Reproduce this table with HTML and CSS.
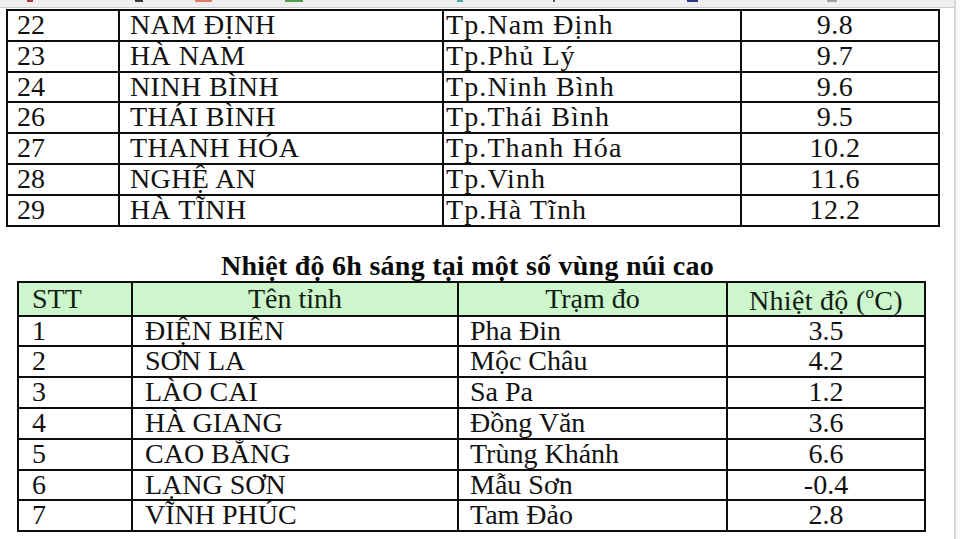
FILE: index.html
```html
<!DOCTYPE html>
<html lang="vi">
<head>
<meta charset="utf-8">
<title>Nhiệt độ</title>
<link rel="stylesheet" href="styles.css">
</head>
<body>
<div class="screen">
  <main class="doc">
    <div class="toolbar">
      <span class="mark m1"></span><span class="mark m2"></span><span class="mark m3"></span><span class="mark m4"></span><span class="mark m5"></span><span class="mark m6"></span><span class="mark m7"></span><span class="mark m8"></span>
    </div>
    <table class="t1">
      <colgroup><col class="c1"><col class="c2"><col class="c3"><col></colgroup>
      <tbody>
        <tr><td class="n">22</td><td class="p">NAM ĐỊNH</td><td class="s">Tp.Nam Định</td><td class="v">9.8</td></tr>
        <tr><td class="n">23</td><td class="p">HÀ NAM</td><td class="s">Tp.Phủ Lý</td><td class="v">9.7</td></tr>
        <tr><td class="n">24</td><td class="p">NINH BÌNH</td><td class="s">Tp.Ninh Bình</td><td class="v">9.6</td></tr>
        <tr><td class="n">26</td><td class="p">THÁI BÌNH</td><td class="s">Tp.Thái Bình</td><td class="v">9.5</td></tr>
        <tr><td class="n">27</td><td class="p">THANH HÓA</td><td class="s">Tp.Thanh Hóa</td><td class="v">10.2</td></tr>
        <tr><td class="n">28</td><td class="p">NGHỆ AN</td><td class="s">Tp.Vinh</td><td class="v">11.6</td></tr>
        <tr><td class="n">29</td><td class="p">HÀ TĨNH</td><td class="s">Tp.Hà Tĩnh</td><td class="v">12.2</td></tr>
      </tbody>
    </table>
    <section class="sec2">
      <h2 class="title">Nhiệt độ 6h sáng tại một số vùng núi cao</h2>
      <table class="t2">
        <colgroup><col class="d1"><col class="d2"><col class="d3"><col></colgroup>
        <thead>
          <tr class="head"><th class="n">STT</th><th class="mid">Tên tỉnh</th><th class="mid">Trạm đo</th><th class="mid temp">Nhiệt độ (<sup>o</sup>C)</th></tr>
        </thead>
        <tbody>
          <tr><td class="n">1</td><td class="p">ĐIỆN BIÊN</td><td class="s">Pha Đin</td><td class="v">3.5</td></tr>
          <tr><td class="n">2</td><td class="p">SƠN LA</td><td class="s">Mộc Châu</td><td class="v">4.2</td></tr>
          <tr><td class="n">3</td><td class="p">LÀO CAI</td><td class="s">Sa Pa</td><td class="v">1.2</td></tr>
          <tr><td class="n">4</td><td class="p">HÀ GIANG</td><td class="s">Đồng Văn</td><td class="v">3.6</td></tr>
          <tr><td class="n">5</td><td class="p">CAO BẰNG</td><td class="s">Trùng Khánh</td><td class="v">6.6</td></tr>
          <tr><td class="n">6</td><td class="p">LẠNG SƠN</td><td class="s">Mẫu Sơn</td><td class="v">-0.4</td></tr>
          <tr><td class="n">7</td><td class="p">VĨNH PHÚC</td><td class="s">Tam Đảo</td><td class="v">2.8</td></tr>
        </tbody>
      </table>
    </section>
  </main>
  <div class="edge"></div>
  <div class="rest"></div>
</div>
</body>
</html>
```
FILE: styles.css
```css
html, body {
  margin: 0;
  padding: 0;
  background: #fff;
}
body {
  font-family: "Liberation Serif", "Times New Roman", serif;
  color: #111;
}
.screen {
  display: flex;
  height: 539px;
  overflow: hidden;
}
.doc {
  width: 954px;
  flex: none;
}
.edge {
  width: 2px;
  flex: none;
  background: #d6d6d6;
}
.rest {
  flex: 1;
  background: #fafafa;
}

/* top strip */
.toolbar {
  height: 7px;
  background: #efefef;
  border-bottom: 1px solid #cbcbcb;
  display: flex;
  align-items: flex-start;
}
.mark { height: 2px; display: block; }
.m1 { margin-left: 27px; width: 6px; background: #b03a3a; }
.m2 { margin-left: 102px; width: 8px; background: #3a3a3a; }
.m3 { margin-left: 52px; width: 17px; background: #e07a66; }
.m4 { margin-left: 73px; width: 18px; background: #4f9f4f; }
.m5 { margin-left: 154px; width: 6px; background: #4aa8a8; }
.m6 { margin-left: 90px; width: 2px; background: #555; }
.m7 { margin-left: 132px; width: 11px; background: #2a3a88; }
.m8 { margin-left: 129px; width: 10px; background: #a0a0a0; }

/* tables */
table {
  border-collapse: collapse;
  table-layout: fixed;
  font-size: 28px;
  line-height: 28.8px;
}
td, th {
  border: 2px solid #0d0d0d;
  padding: 0;
  white-space: nowrap;
  overflow: hidden;
  vertical-align: top;
  font-weight: normal;
  text-align: left;
}

.t1 {
  width: 934px;
  margin: 1px 0 0 6px;
}
.t1 .c1 { width: 112px; }
.t1 .c2 { width: 324px; }
.t1 .c3 { width: 298px; }
.t1 td.n { padding-left: 9px; }
.t1 td.p { padding-left: 10px; letter-spacing: 0.4px; }
.t1 td.s { padding-left: 2px; letter-spacing: 1.1px; }
.t1 td.v { text-align: center; padding-right: 10px; letter-spacing: 0.5px; }

.sec2 {
  width: 909px;
  margin-left: 17px;
}
.title {
  margin: 24px 0 0;
  padding-right: 8px;
  font-size: 28px;
  line-height: 30px;
  font-weight: bold;
  letter-spacing: 0.25px;
  text-align: center;
  color: #0a0a0a;
}
.t2 {
  width: 909px;
}
.t2 .d1 { width: 114px; }
.t2 .d2 { width: 326px; }
.t2 .d3 { width: 269px; }
.t2 .n { padding-left: 13px; }
.t2 td.p { padding-left: 12px; }
.t2 td.s { padding-left: 11px; }
.t2 td.v { text-align: center; }

.head th {
  background: #cdf6cd;
  color: #102010;
  line-height: 29px;
  padding-top: 1px;
  padding-bottom: 2px;
}
.head th.mid { text-align: center; }
.head th.temp {
  padding-top: 3px;
  padding-bottom: 0;
  letter-spacing: 0.3px;
}
sup {
  font-size: 17px;
  line-height: 0;
  vertical-align: 12px;
}
```
